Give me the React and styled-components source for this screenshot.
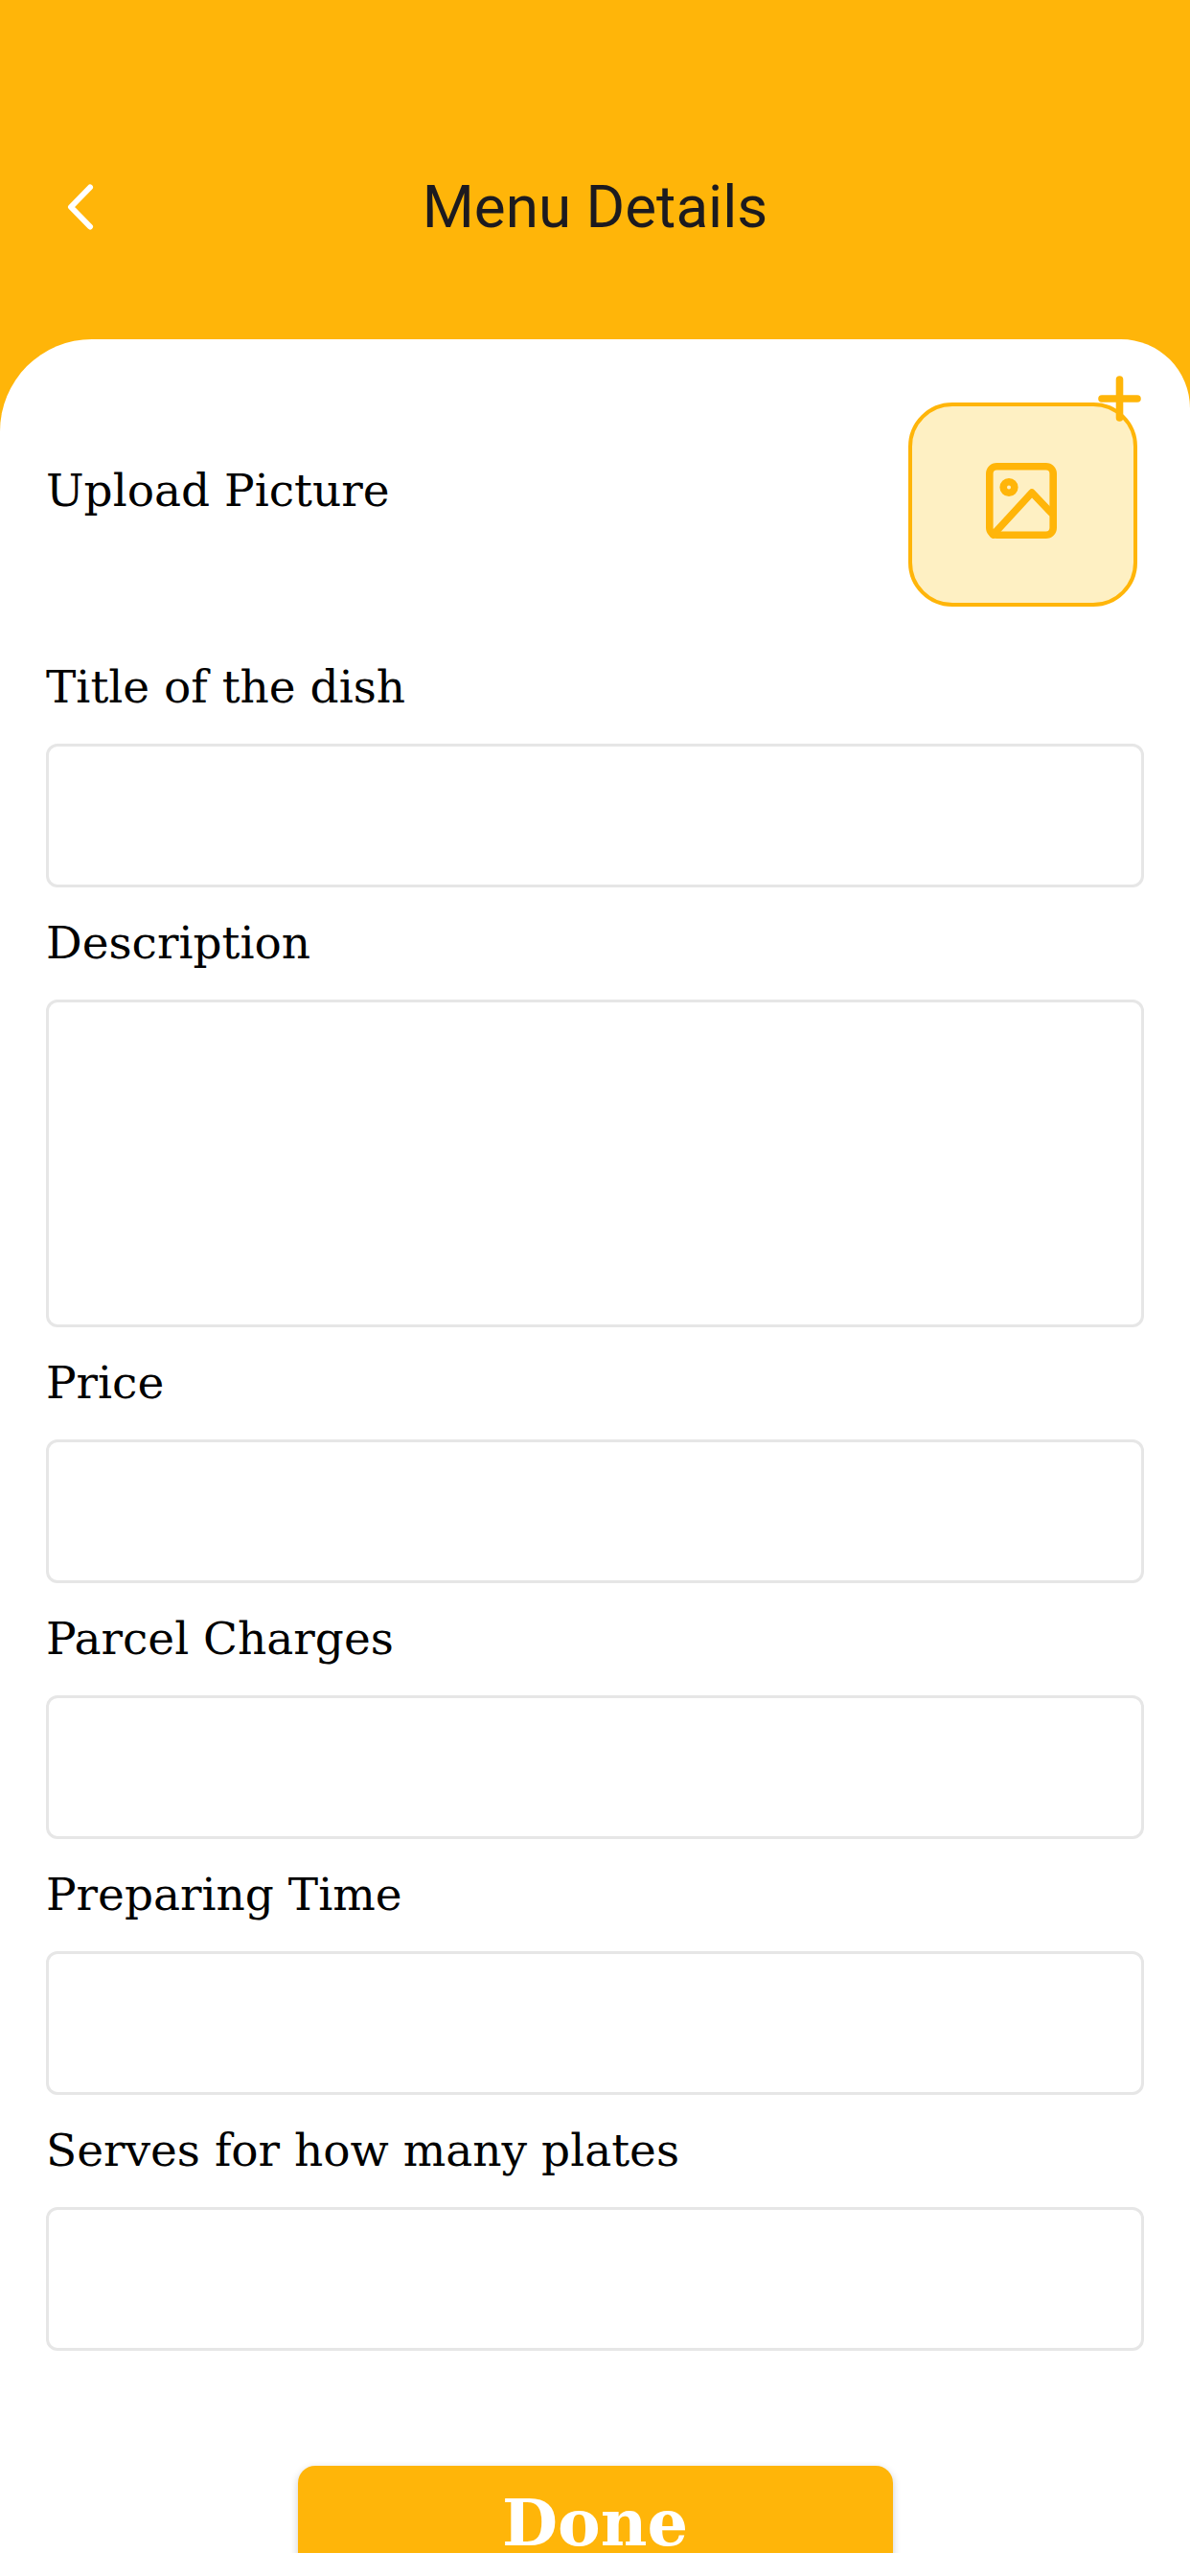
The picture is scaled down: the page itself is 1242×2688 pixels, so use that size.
import React from 'react'
import styled, { createGlobalStyle } from 'styled-components'

const GlobalStyle = createGlobalStyle`
  * {
    box-sizing: border-box;
  }
  body {
    margin: 0;
    background: #ffffff;
  }
`

const Screen = styled.div`
  height: 100vh;
  display: flex;
  flex-direction: column;
  padding-bottom: 24px;
  background: #ffffff;
  color: #000000;
  font-family: 'DejaVu Serif', serif;
`

const Header = styled.header`
  flex-shrink: 0;
  display: grid;
  grid-template-columns: 120px 1fr 120px;
  align-items: center;
  padding: 168px 24px 90px;
  background: #ffb509;
`

const BackButton = styled.button`
  display: flex;
  align-items: center;
  height: 96px;
  padding: 0 46px;
  border: 0;
  background: none;
  cursor: pointer;
`

const Title = styled.h1`
  margin: 0;
  color: #1c1a1f;
  font-family: Roboto, sans-serif;
  font-size: 62px;
  font-weight: 400;
  line-height: 72px;
  text-align: center;
`

const Body = styled.main`
  flex: 1;
  min-height: 0;
  overflow: hidden;
  background: #ffb509;
`

const Sheet = styled.form`
  display: flex;
  flex-direction: column;
  padding: 66px 48px 48px;
  border-radius: 96px 72px 0 0;
  background: #ffffff;
`

const UploadRow = styled.div`
  display: flex;
  justify-content: space-between;
  align-items: flex-start;
  padding-right: 7px;
  margin-bottom: 26px;
`

const UploadLabel = styled.span`
  padding-top: 60px;
  font-size: 47px;
  line-height: 64px;
`

const UploadButton = styled.button`
  position: relative;
  display: flex;
  align-items: center;
  justify-content: center;
  width: 239px;
  height: 213px;
  padding: 0 3px 8px 0;
  border: 4px solid #ffb509;
  border-radius: 46px;
  background: #fef0c3;
  cursor: pointer;
`

const PlusBadge = styled.svg`
  position: absolute;
  top: -32px;
  right: -8px;
`

const Field = styled.div`
  display: flex;
  flex-direction: column;
`

const Label = styled.label`
  padding: 26px 0 27px;
  font-size: 47px;
  line-height: 64px;
`

const Input = styled.input`
  width: 100%;
  height: ${({ $height }) => $height || 150}px;
  padding: 24px;
  border: 3px solid #e6e6e6;
  border-radius: 12px;
  outline: none;
  resize: none;
  background: #ffffff;
  font: inherit;
  font-size: 47px;
  :focus {
    border-color: #ffb509;
  }
`

const DoneButton = styled.button`
  align-self: center;
  width: 50vw;
  height: 120px;
  margin-top: 120px;
  padding: 0;
  border: 0;
  border-radius: 18px;
  background: #ffb509;
  box-shadow: 0 3px 8px rgba(0, 0, 0, 0.2);
  color: #ffffff;
  font: inherit;
  font-size: 67px;
  font-weight: 700;
  line-height: 120px;
  cursor: pointer;
`

const fields = [
  { id: 'title', label: 'Title of the dish' },
  { id: 'description', label: 'Description', as: 'textarea', height: 342 },
  { id: 'price', label: 'Price' },
  { id: 'parcel', label: 'Parcel Charges' },
  { id: 'time', label: 'Preparing Time' },
  { id: 'plates', label: 'Serves for how many plates' }
]

function BackIcon() {
  return (
    <svg width="28" height="48" viewBox="0 0 28 48" fill="none" aria-hidden="true">
      <path d="M24 3.5L4 24l20 20.5" stroke="#ffffff" strokeWidth="6" strokeLinecap="round" strokeLinejoin="round" />
    </svg>
  )
}

function ImageIcon() {
  return (
    <svg width="74" height="79" viewBox="0 0 74 79" fill="none" stroke="#ffb509" strokeWidth="7.6" aria-hidden="true">
      <rect x="3.8" y="3.8" width="66.4" height="71.4" rx="7.5" />
      <circle cx="24" cy="25.5" r="5.8" />
      <path d="M7.5 75L48 31l20 21" strokeLinecap="round" strokeLinejoin="round" />
    </svg>
  )
}

export default function App() {
  return (
    <Screen>
      <GlobalStyle />
      <Header>
        <BackButton type="button" aria-label="Back">
          <BackIcon />
        </BackButton>
        <Title>Menu Details</Title>
      </Header>
      <Body>
        <Sheet onSubmit={e => e.preventDefault()}>
          <UploadRow>
            <UploadLabel id="upload-label">Upload Picture</UploadLabel>
            <UploadButton type="button" aria-labelledby="upload-label">
              <ImageIcon />
              <PlusBadge width="45" height="48" viewBox="0 0 45 48" fill="none" aria-hidden="true">
                <path d="M22.5 4v40M4 24h37" stroke="#ffb509" strokeWidth="7.6" strokeLinecap="round" />
              </PlusBadge>
            </UploadButton>
          </UploadRow>
          {fields.map(({ id, label, as, height }) => (
            <Field key={id}>
              <Label htmlFor={id}>{label}</Label>
              <Input as={as} id={id} name={id} $height={height} />
            </Field>
          ))}
          <DoneButton type="submit">Done</DoneButton>
        </Sheet>
      </Body>
    </Screen>
  )
}
